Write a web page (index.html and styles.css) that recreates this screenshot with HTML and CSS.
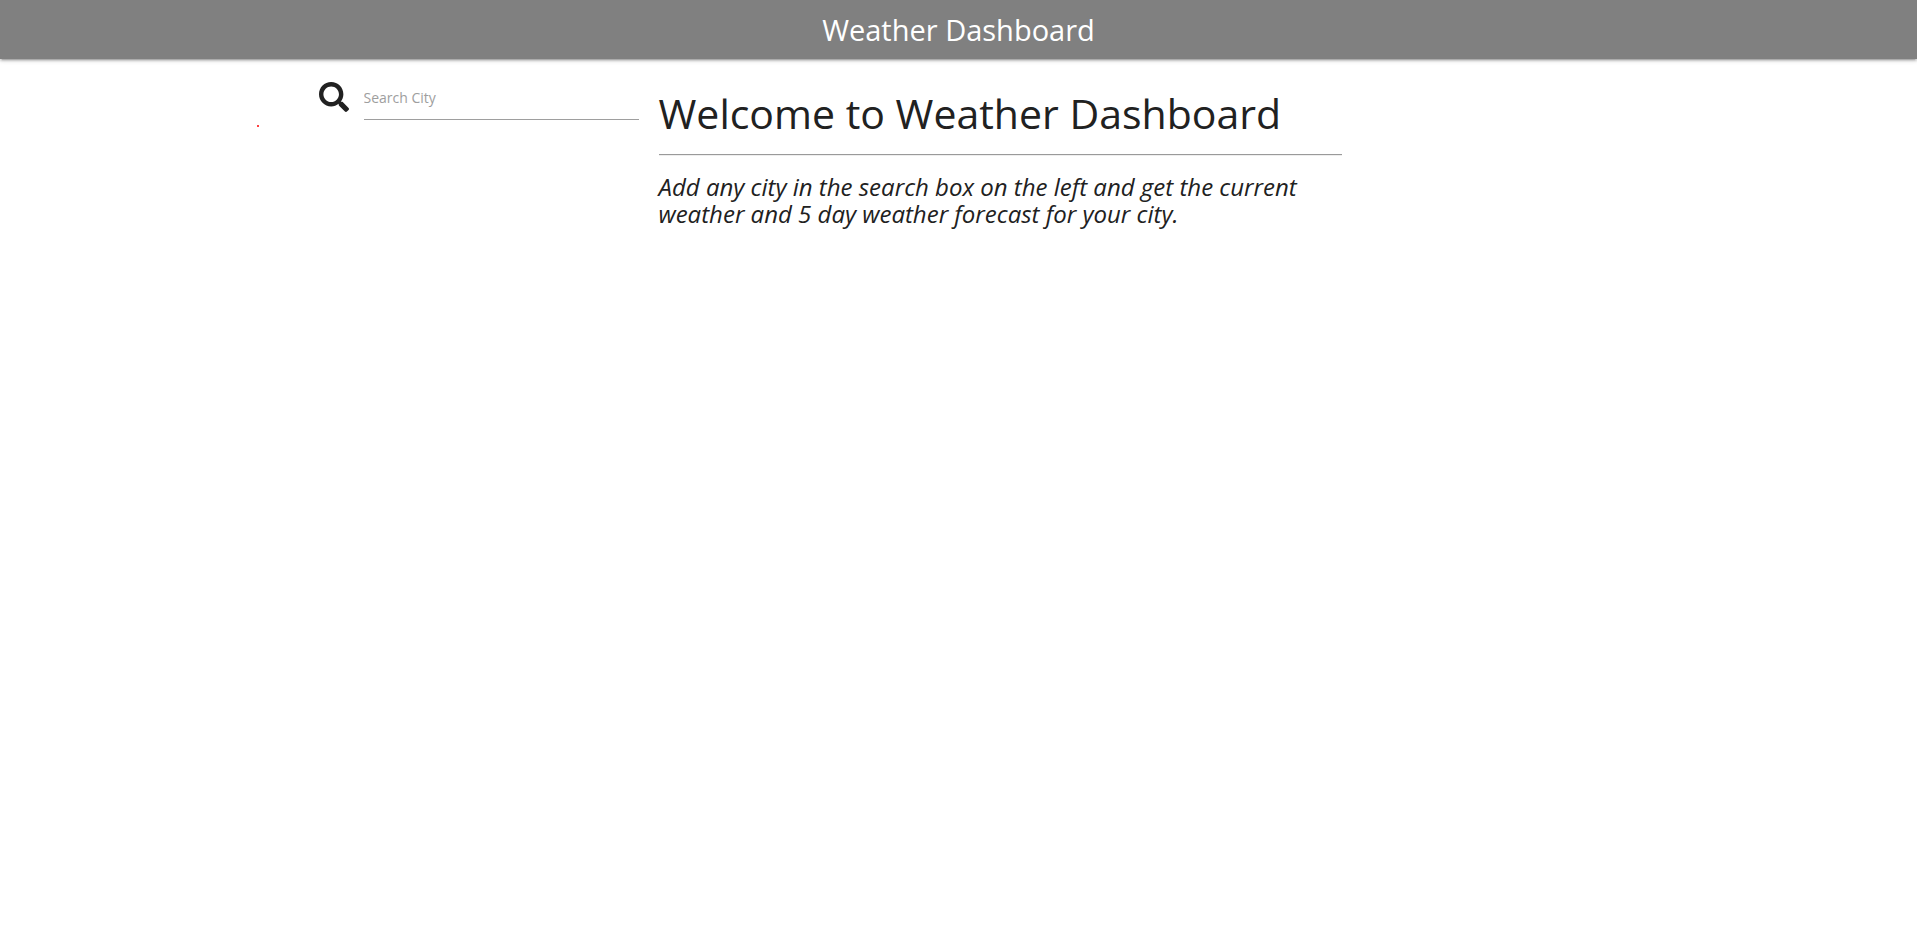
FILE: index.html
```html
<!DOCTYPE html>
<html lang="en">
<head>
  <meta charset="utf-8">
  <meta name="viewport" content="width=device-width, initial-scale=1">
  <title>Weather Dashboard</title>
  <link rel="stylesheet" href="styles.css">
</head>
<body>
  <header class="navbar">
    <span class="brand">Weather Dashboard</span>
  </header>
  <main class="container">
    <form class="search">
      <label class="search-label" for="city" aria-label="Search City">
        <svg class="search-icon" viewBox="0 0 512 512" aria-hidden="true">
          <path d="M505 442.700L405.300 343c-4.500-4.500-10.600-7-17-7H372c27.600-35.300 44-79.700 44-128C416 93.100 322.900 0 208 0S0 93.100 0 208s93.100 208 208 208c48.300 0 92.700-16.400 128-44v16.300c0 6.400 2.500 12.500 7 17l99.700 99.700c9.400 9.400 24.600 9.400 33.900 0l28.300-28.300c9.400-9.400 9.400-24.600.1-34zM208 341c-73.500 0-133-59.500-133-133S134.500 75 208 75s133 59.500 133 133-59.500 133-133 133z"/>
        </svg>
      </label>
      <input class="search-input" id="city" type="text" placeholder="Search City">
      <span class="marker"></span>
    </form>
    <section class="welcome">
      <h1 class="title">Welcome to Weather Dashboard</h1>
      <hr class="divider">
      <p class="intro">Add any city in the search box on the left and get the current weather and 5 day weather forecast for your city.</p>
    </section>
  </main>
</body>
</html>
```
FILE: styles.css
```css
* {
  box-sizing: border-box;
}

body {
  margin: 0;
  background: #fff;
  color: #212121;
  font-family: "Segoe UI", "Open Sans", "Noto Sans", sans-serif;
}

.navbar {
  display: flex;
  justify-content: center;
  background: #808080;
  color: #fff;
  box-shadow: 0 2px 2px 0 rgba(0, 0, 0, 0.14), 0 3px 1px -2px rgba(0, 0, 0, 0.12), 0 1px 5px 0 rgba(0, 0, 0, 0.2);
}

.brand {
  font-size: 29px;
  line-height: 59px;
}

.container {
  display: grid;
  grid-template-columns: 320px minmax(0, 683px);
  gap: 20px;
  max-width: 1280px;
  margin: 0 auto;
}

.search {
  position: relative;
  display: flex;
  align-items: flex-start;
  gap: 15px;
  padding-top: 15px;
}

.search-label {
  padding-top: 8px;
}

.search-icon {
  display: block;
  width: 30px;
  height: 30px;
  fill: #212121;
}

.search-input {
  flex: 1;
  min-width: 0;
  height: 46px;
  padding: 1px 0 0;
  border: 0;
  border-bottom: 1px solid #9e9e9e;
  outline: 0;
  background: transparent;
  color: #212121;
  font: 14px "Segoe UI", "Open Sans", "Noto Sans", sans-serif;
}

.search-input::placeholder {
  color: #9e9e9e;
  opacity: 1;
}

.marker {
  position: absolute;
  top: 66px;
  left: -62px;
  width: 2px;
  height: 2px;
  border-radius: 1px;
  background: #f00;
}

.title {
  margin: 28px 0 15px;
  font-size: 41px;
  font-weight: 400;
  line-height: 52px;
}

.divider {
  margin: 0;
  border: 0;
  border-top: 1px solid #9a9a9a;
  border-bottom: 1px solid #eee;
}

.intro {
  margin: 17px 0;
  font-size: 24px;
  font-style: italic;
  line-height: 27px;
}
```
